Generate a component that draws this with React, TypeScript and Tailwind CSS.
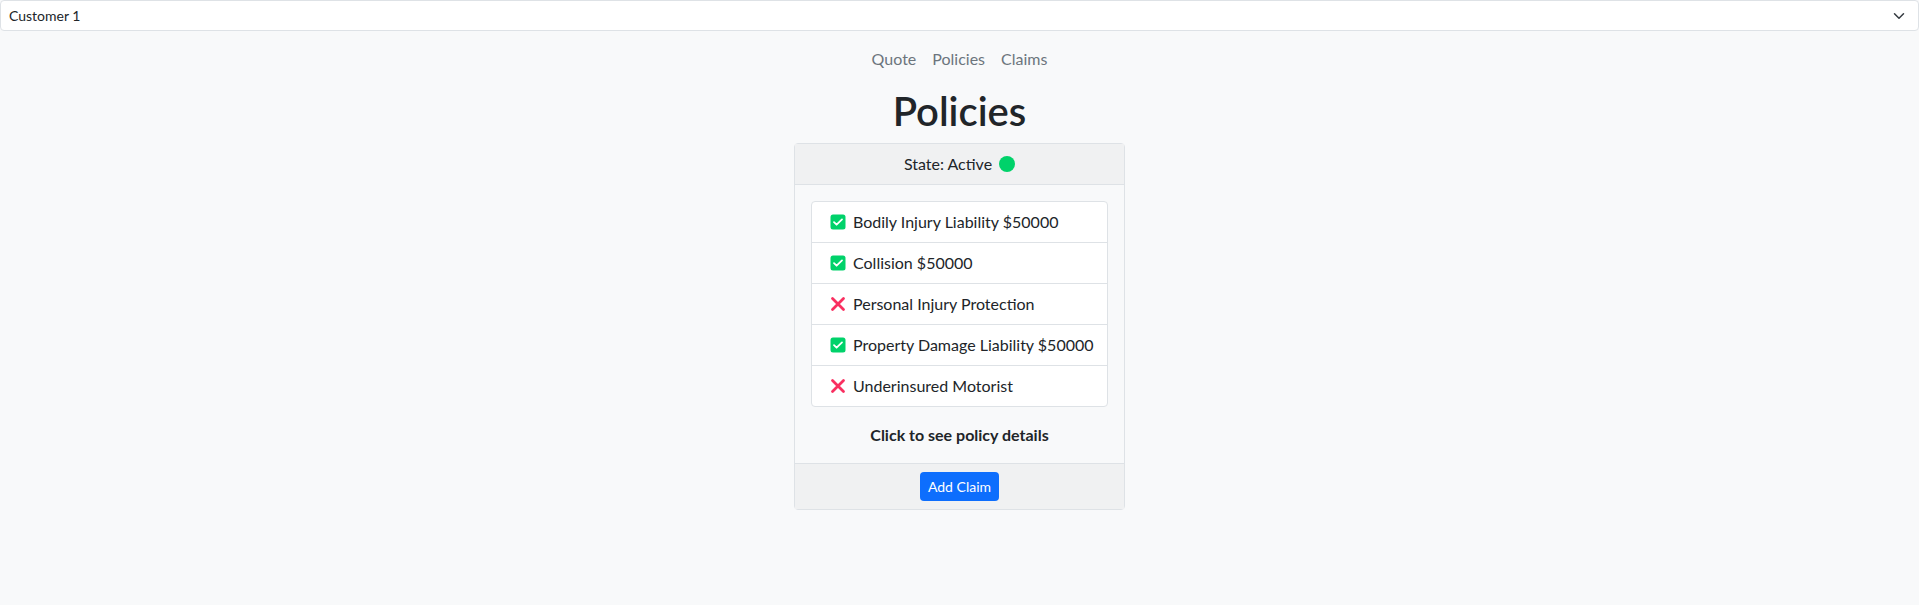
const policies = [
  { name: "Bodily Injury Liability $50000", active: true },
  { name: "Collision $50000", active: true },
  { name: "Personal Injury Protection", active: false },
  { name: "Property Damage Liability $50000", active: true },
  { name: "Underinsured Motorist", active: false },
];

function CheckIcon() {
  return (
    <svg width="16" height="16" viewBox="0 0 16 16" className="ml-[2px] shrink-0">
      <rect x="0.5" y="0.5" width="15" height="15" rx="2.5" fill="#00d26a" />
      <path
        d="M4 8.2l2.6 2.5L12 5.4"
        fill="none"
        stroke="#fff"
        strokeWidth="1.8"
        strokeLinecap="round"
        strokeLinejoin="round"
      />
    </svg>
  );
}

function CrossIcon() {
  return (
    <svg width="16" height="16" viewBox="0 0 16 16" className="ml-[2px] shrink-0">
      <path
        d="M2.5 2.5l11 11M13.5 2.5l-11 11"
        fill="none"
        stroke="#f92f60"
        strokeWidth="2.8"
        strokeLinecap="round"
      />
    </svg>
  );
}

export default function App() {
  return (
    <div className="min-h-screen bg-[#f8f9fa] text-[#212529] font-['Lato',sans-serif]">
      <div className="relative">
        <select className="block w-full appearance-none rounded border border-[#dee2e6] bg-white py-1 pl-2 pr-9 text-sm leading-[1.5] text-[#212529] outline-none">
          <option>Customer 1</option>
          <option>Customer 2</option>
        </select>
        <svg
          width="16"
          height="12"
          viewBox="0 0 16 16"
          className="pointer-events-none absolute right-3 top-[10px]"
        >
          <path
            d="m2 5 6 6 6-6"
            fill="none"
            stroke="#343a40"
            strokeWidth="2"
            strokeLinecap="round"
            strokeLinejoin="round"
          />
        </svg>
      </div>

      <nav className="mt-2 flex justify-center">
        {["Quote", "Policies", "Claims"].map((l) => (
          <a
            key={l}
            href="#"
            className="px-2 py-2 leading-6 text-[#6c757d] hover:text-[#495057]"
          >
            {l}
          </a>
        ))}
      </nav>

      <h1 className="mt-2 mb-2 text-center text-[40px] font-semibold leading-[1.2]">
        Policies
      </h1>

      <div className="mx-auto w-[331px] rounded border border-[#dee2e6] bg-[#f8f9fa]">
        <div className="flex items-center justify-center gap-[7px] border-b border-[#dee2e6] bg-[#f0f1f2] px-4 py-2 leading-6">
          <span>State: Active</span>
          <span className="inline-block h-4 w-4 rounded-full bg-[#00d26a]" />
        </div>

        <div className="p-4">
          <ul className="overflow-hidden rounded border border-[#dee2e6] bg-white">
            {policies.map((p) => (
              <li
                key={p.name}
                className="flex items-center gap-[7px] whitespace-nowrap border-b border-[#dee2e6] px-4 py-2 leading-6 last:border-b-0"
              >
                {p.active ? <CheckIcon /> : <CrossIcon />}
                <span>{p.name}</span>
              </li>
            ))}
          </ul>
          <p className="mt-4 text-center font-bold leading-6">
            Click to see policy details
          </p>
        </div>

        <div className="flex justify-center border-t border-[#dee2e6] bg-[#f0f1f2] px-4 py-2">
          <button className="rounded bg-[#0d6efd] px-2 py-1 text-sm leading-[1.5] text-white hover:bg-[#0b5ed7]">
            Add Claim
          </button>
        </div>
      </div>
    </div>
  );
}
